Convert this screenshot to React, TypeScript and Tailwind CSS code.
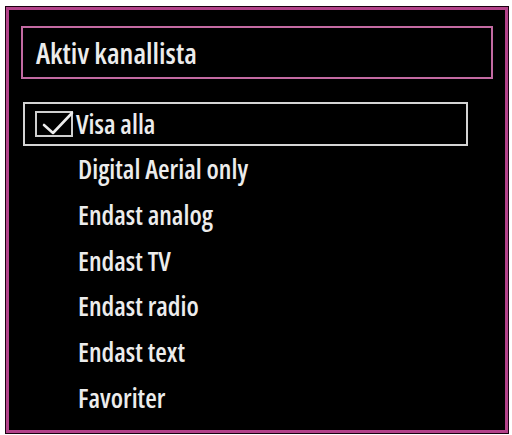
const ITEMS = [
  "Digital Aerial only",
  "Endast analog",
  "Endast TV",
  "Endast radio",
  "Endast text",
  "Favoriter",
];

function CheckBox() {
  return (
    <div className="w-[38px] h-[26px] border-2 border-[#cfcfcf] shrink-0 relative">
      <svg className="absolute left-[4px] top-[-2px]" width="34" height="27" viewBox="0 0 34 27">
        <path d="M3 14 L12 22 L31 2" fill="none" stroke="#ececec" strokeWidth="2.6" strokeLinecap="round" strokeLinejoin="round" />
      </svg>
    </div>
  );
}

export default function App() {
  return (
    <div className="w-[512px] h-[435px] bg-white pt-[6px] pl-[5px]">
      <div className="w-[504px] h-[428px] border border-[#1a0010]">
        <div className="w-full h-full border-[3px] border-[#b3428a] bg-black px-[12px] pt-[16px] text-[#ececec] font-['Open_Sans',sans-serif] [font-stretch:75%] font-semibold">
          <div className="w-[472px] h-[53px] border-2 border-[#c36aa2] flex items-center pl-[13px] text-[29px] leading-none">
            Aktiv kanallista
          </div>
          <div className="mt-[22px] flex flex-col text-[26.5px] leading-none">
            <div className="h-[45.7px] flex items-center pl-[2px]">
              <div className="w-[445px] h-[44px] border-2 border-[#d4d4d4] flex items-center pl-[10px] gap-[3px]">
                <CheckBox />
                <span>Visa alla</span>
              </div>
            </div>
            {ITEMS.map((item) => (
              <div key={item} className="h-[45.7px] flex items-center pl-[57px]">
                {item}
              </div>
            ))}
          </div>
        </div>
      </div>
    </div>
  );
}
